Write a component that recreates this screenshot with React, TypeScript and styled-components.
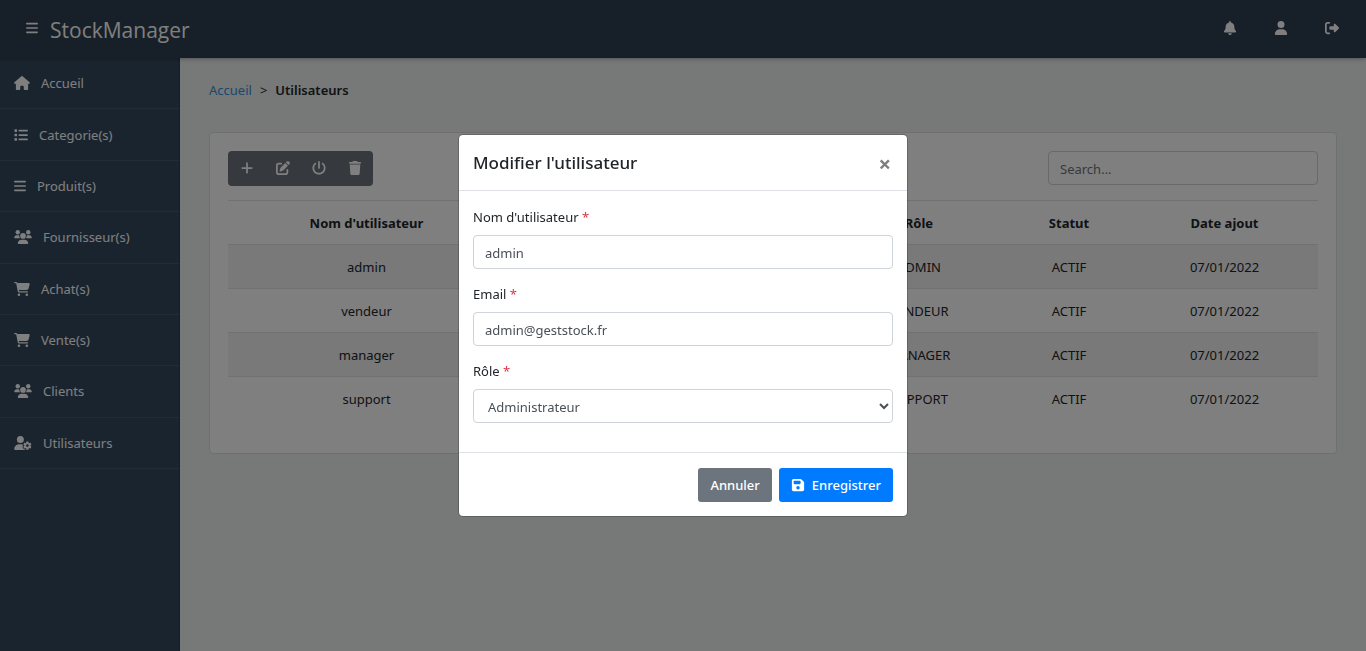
import React from 'react';
import styled, { createGlobalStyle } from 'styled-components';
import {
  FaBars, FaBell, FaUser, FaRightFromBracket, FaHouse, FaList, FaCartShopping,
  FaUserGear, FaPlus, FaPenToSquare, FaPowerOff, FaTrash, FaFloppyDisk,
} from 'react-icons/fa6';

const GlobalStyle = createGlobalStyle`
  *, *::before, *::after { box-sizing: border-box; }
  body {
    margin: 0;
    font-family: "Segoe UI", "Noto Sans", "Open Sans", sans-serif;
    font-size: 13px;
    line-height: 22px;
    color: #212529;
    background: #eef2f0;
  }
  button, input, select { font: inherit; }
`;

const Page = styled.div`
  display: flex;
  flex-direction: column;
  min-height: 100vh;
`;

const Header = styled.header`
  display: flex;
  align-items: center;
  justify-content: space-between;
  height: 58px;
  padding: 0 27px 2px 26px;
  background: #2e3e50;
  color: #fff;
  box-shadow: 0 1px 4px rgba(0, 0, 0, 0.3);
  z-index: 1;
`;

const Brand = styled.div`
  display: flex;
  align-items: center;
  gap: 12px;
`;

const BrandName = styled.a`
  padding-top: 4px;
  font-family: "Segoe UI", "Open Sans", sans-serif;
  font-size: 21px;
  line-height: 30px;
  color: #fff;
  text-decoration: none;
`;

const IconButton = styled.button`
  display: flex;
  padding: 0;
  border: 0;
  background: none;
  color: #fff;
  font-size: 14px;

  svg { display: block; }
`;

const BurgerIcon = styled(FaBars)`
  width: 12px;
  height: 14px;
`;

const HeaderActions = styled.div`
  display: flex;
  gap: 37px;

  ${IconButton} {
    width: 14px;
    justify-content: center;
  }
`;

const Columns = styled.div`
  display: flex;
  flex: 1;
`;

const Sidebar = styled.nav`
  flex: 0 0 180px;
  background: #34495e;
  border-right: 1px solid #2e3d50;
`;

const Menu = styled.ul`
  display: flex;
  flex-direction: column;
  min-height: 411px;
  margin: 0;
  padding: 0;
  list-style: none;
`;

const MenuItem = styled.li`
  display: flex;
  flex: 1;
  border-bottom: 1px solid #465869;
`;

const MenuLink = styled.a<{ $iconWidth: number }>`
  display: flex;
  flex: 1;
  align-items: center;
  gap: 11px;
  padding: 0 14px;
  color: #fff;
  text-decoration: none;

  svg {
    flex: none;
    width: ${(p) => p.$iconWidth}px;
    height: 14px;
  }
`;

const Main = styled.main`
  flex: 1;
  min-width: 0;
  padding: 21px 29px;
`;

const Breadcrumb = styled.nav`
  display: flex;
  gap: 8px;
  margin-bottom: 31px;

  a { color: #3490dc; text-decoration: none; }
  strong { font-weight: 600; }
`;

const Card = styled.section`
  padding: 18px 18px 32px;
  background: #fff;
  border: 1px solid #dfdfdf;
  border-radius: 4px;
`;

const CardTools = styled.div`
  display: flex;
  justify-content: space-between;
  margin-bottom: 14px;
`;

const ButtonGroup = styled.div`
  display: flex;
  height: 35px;
  padding: 0 0 1px 1px;
  border-radius: 4px;
  background: #6c757d;
`;

const ToolButton = styled(IconButton)`
  width: 36px;
  align-items: center;
  justify-content: center;
`;

const TextInput = styled.input`
  display: block;
  width: 100%;
  height: 34px;
  padding: 2px 11px 0;
  color: #495057;
  background: #fff;
  border: 1px solid #ced4da;
  border-radius: 4px;
  outline: none;

  &::placeholder { color: #6c757d; opacity: 1; }
`;

const SearchBox = styled.div`
  width: 270px;
`;

const Table = styled.table`
  width: 100%;
  table-layout: fixed;
  border-collapse: collapse;
  text-align: center;

  th, td {
    height: 44px;
    padding: 1px 10px 0;
    border-top: 1px solid #dee2e6;
  }
  th { font-weight: 700; }
  tbody tr:nth-child(odd) { background: #f2f2f2; }
`;

const Column = styled.col<{ $width: number }>`
  width: ${(p) => p.$width}px;
`;

const Backdrop = styled.div`
  position: fixed;
  inset: 0;
  z-index: 10;
  display: flex;
  align-items: center;
  justify-content: center;
  background: rgba(0, 0, 0, 0.5);
`;

const Dialog = styled.form`
  width: 450px;
  max-width: 100%;
  background: #fff;
  background-clip: padding-box;
  border: 1px solid rgba(0, 0, 0, 0.2);
  border-radius: 5px;
`;

const DialogHeader = styled.div`
  display: flex;
  align-items: center;
  justify-content: space-between;
  height: 56px;
  padding: 0 14px;
  border-bottom: 1px solid #dee2e6;
`;

const DialogTitle = styled.h5`
  margin: 0;
  font-size: 17px;
  font-weight: 500;
  line-height: 26px;
`;

const CloseButton = styled.button`
  padding: 0 2px;
  border: 0;
  background: none;
  color: #7f7f7f;
  font-size: 22px;
  font-weight: 700;
  line-height: 22px;
`;

const DialogBody = styled.div`
  display: flex;
  flex-direction: column;
  gap: 14px;
  padding: 15px 14px 29px;
`;

const Field = styled.div`
  display: flex;
  flex-direction: column;
  gap: 7px;
`;

const Required = styled.span`
  color: #dc3545;
`;

const Select = styled.select`
  width: 100%;
  height: 34px;
  padding: 2px 1px 0 10px;
  color: #495057;
  background: #fff;
  border: 1px solid #ced4da;
  border-radius: 4px;
`;

const DialogFooter = styled.div`
  display: flex;
  justify-content: flex-end;
  gap: 7px;
  padding: 15px 14px 14px;
  border-top: 1px solid #dee2e6;
`;

const Button = styled.button<{ $primary?: boolean }>`
  display: flex;
  align-items: center;
  gap: 7px;
  height: 34px;
  padding: 0 12px;
  border: 0;
  border-radius: 3px;
  background: ${(p) => (p.$primary ? '#007bff' : '#6c757d')};
  color: #fff;
  font-weight: 500;

  svg { font-size: 14px; }
`;

function UsersIcon() {
  return (
    <svg viewBox="0 0 640 512" fill="currentColor" aria-hidden="true">
      <circle cx="128" cy="80" r="80" />
      <circle cx="512" cy="80" r="80" />
      <circle cx="320" cy="216" r="104" />
      <path d="M369.9 352H270.1C191.6 352 128 411.7 128 485.3C128 500.1 140.7 512 156.4 512h327.2C499.3 512 512 500.1 512 485.3C512 411.7 448.4 352 369.9 352z" />
      <path d="M183.9 216c0-5.4 1-10.6 1.6-15.9C174.6 194.1 162.6 192 149.9 192H88.1C39.4 192 0 233.8 0 285.3C0 295.6 7.9 304 17.6 304h199.5C196.7 280.2 183.9 249.7 183.9 216z" />
      <path d="M551.9 192h-61.8c-12.8 0-24.9 3-35.9 8.2C454.8 205.5 455.8 210.6 455.8 216c0 33.7-12.8 64.2-33.2 88h199.7C632.1 304 640 295.6 640 285.3C640 233.8 600.6 192 551.9 192z" />
    </svg>
  );
}

const menu = [
  { label: 'Accueil', Icon: FaHouse, width: 16 },
  { label: 'Categorie(s)', Icon: FaList, width: 14 },
  { label: 'Produit(s)', Icon: FaBars, width: 12 },
  { label: 'Fournisseur(s)', Icon: UsersIcon, width: 18 },
  { label: 'Achat(s)', Icon: FaCartShopping, width: 16 },
  { label: 'Vente(s)', Icon: FaCartShopping, width: 16 },
  { label: 'Clients', Icon: UsersIcon, width: 18 },
  { label: 'Utilisateurs', Icon: FaUserGear, width: 18 },
];

const users = [
  { name: 'admin', email: 'admin@geststock.fr', role: 'ADMIN' },
  { name: 'vendeur', email: 'vendeur@geststock.fr', role: 'VENDEUR' },
  { name: 'manager', email: 'manager@geststock.fr', role: 'MANAGER' },
  { name: 'support', email: 'support@geststock.fr', role: 'SUPPORT' },
];

const tools = [
  { label: 'Ajouter', Icon: FaPlus },
  { label: 'Modifier', Icon: FaPenToSquare },
  { label: 'Activer', Icon: FaPowerOff },
  { label: 'Supprimer', Icon: FaTrash },
];

export default function App() {
  return (
    <>
      <GlobalStyle />
      <Page>
        <Header>
          <Brand>
            <IconButton aria-label="Menu"><BurgerIcon /></IconButton>
            <BrandName href="#">StockManager</BrandName>
          </Brand>
          <HeaderActions>
            <IconButton aria-label="Notifications"><FaBell /></IconButton>
            <IconButton aria-label="Profil"><FaUser /></IconButton>
            <IconButton aria-label="Déconnexion"><FaRightFromBracket /></IconButton>
          </HeaderActions>
        </Header>
        <Columns>
          <Sidebar>
            <Menu>
              {menu.map(({ label, Icon, width }) => (
                <MenuItem key={label}>
                  <MenuLink href="#" $iconWidth={width}><Icon />{label}</MenuLink>
                </MenuItem>
              ))}
            </Menu>
          </Sidebar>
          <Main>
            <Breadcrumb>
              <a href="#">Accueil</a>
              <span>&gt;</span>
              <strong>Utilisateurs</strong>
            </Breadcrumb>
            <Card>
              <CardTools>
                <ButtonGroup>
                  {tools.map(({ label, Icon }) => (
                    <ToolButton key={label} aria-label={label}><Icon /></ToolButton>
                  ))}
                </ButtonGroup>
                <SearchBox>
                  <TextInput type="search" placeholder="Search..." aria-label="Search" />
                </SearchBox>
              </CardTools>
              <Table>
                <colgroup>
                  <Column $width={277} />
                  <Column $width={326} />
                  <Column $width={176} />
                  <Column $width={124} />
                  <Column $width={187} />
                </colgroup>
                <thead>
                  <tr>
                    <th>Nom d'utilisateur</th>
                    <th>Email</th>
                    <th>Rôle</th>
                    <th>Statut</th>
                    <th>Date ajout</th>
                  </tr>
                </thead>
                <tbody>
                  {users.map((u) => (
                    <tr key={u.name}>
                      <td>{u.name}</td>
                      <td>{u.email}</td>
                      <td>{u.role}</td>
                      <td>ACTIF</td>
                      <td>07/01/2022</td>
                    </tr>
                  ))}
                </tbody>
              </Table>
            </Card>
          </Main>
        </Columns>
      </Page>
      <Backdrop>
        <Dialog role="dialog" aria-labelledby="dialog-title">
          <DialogHeader>
            <DialogTitle id="dialog-title">Modifier l'utilisateur</DialogTitle>
            <CloseButton type="button" aria-label="Fermer">×</CloseButton>
          </DialogHeader>
          <DialogBody>
            <Field>
              <label htmlFor="username">Nom d'utilisateur <Required>*</Required></label>
              <TextInput id="username" defaultValue="admin" />
            </Field>
            <Field>
              <label htmlFor="email">Email <Required>*</Required></label>
              <TextInput id="email" type="email" defaultValue="admin@geststock.fr" />
            </Field>
            <Field>
              <label htmlFor="role">Rôle <Required>*</Required></label>
              <Select id="role" defaultValue="admin">
                <option value="admin">Administrateur</option>
                <option value="vendeur">Vendeur</option>
                <option value="manager">Manager</option>
                <option value="support">Support</option>
              </Select>
            </Field>
          </DialogBody>
          <DialogFooter>
            <Button type="button">Annuler</Button>
            <Button type="submit" $primary><FaFloppyDisk />Enregistrer</Button>
          </DialogFooter>
        </Dialog>
      </Backdrop>
    </>
  );
}
